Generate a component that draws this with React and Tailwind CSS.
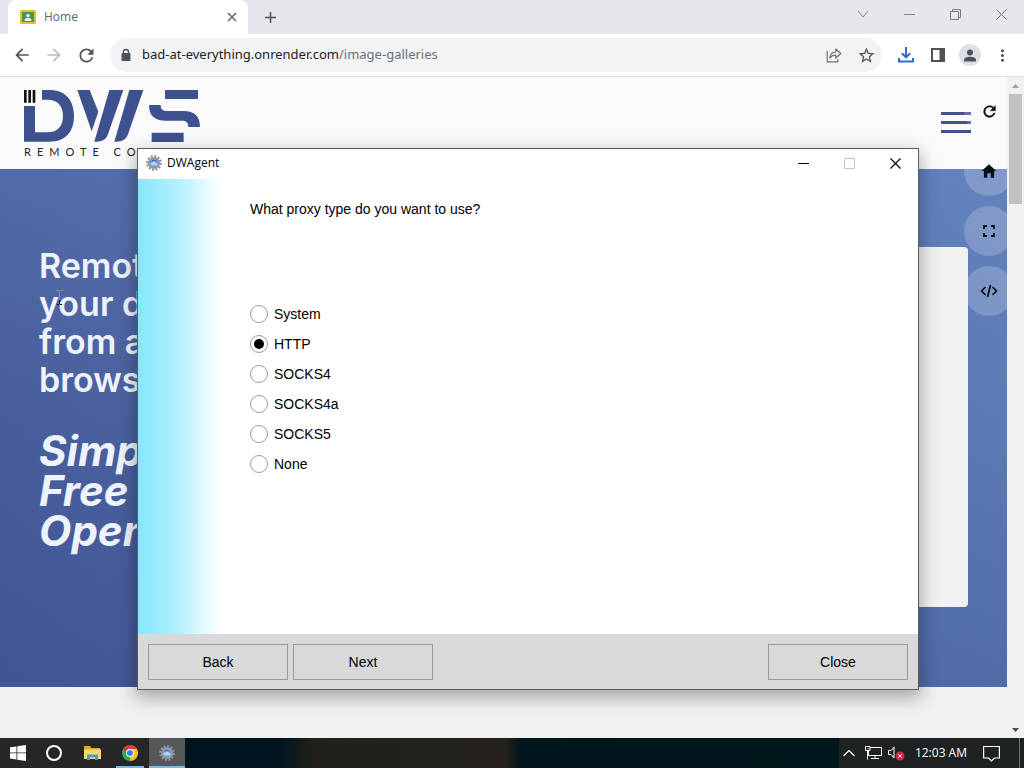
import React, { useState } from "react";
import {
  MdArrowBack,
  MdArrowForward,
  MdRefresh,
  MdStarBorder,
  MdMoreVert,
  MdAdd,
} from "react-icons/md";
import { IoMdRefresh, IoMdHome } from "react-icons/io";

const proxyTypes = ["System", "HTTP", "SOCKS4", "SOCKS4a", "SOCKS5", "None"];

const App = () => {
  return (
    <div className="relative flex min-h-screen flex-col overflow-hidden bg-[#f1f1f1] font-['Open_Sans','Noto_Sans',sans-serif]">
      <TabStrip />
      <Toolbar />
      <div className="flex flex-1">
        <WebPage />
        <Scrollbar />
      </div>
      <Taskbar />
      <AgentWindow />
    </div>
  );
};

const TabStrip = () => (
  <div className="flex h-[34px] items-stretch bg-[#e5e7ea] pl-2">
    <div className="flex w-60 items-center rounded-t-lg bg-white px-3 text-xs text-[#5f6368]">
      <Favicon />
      <span className="ml-2 flex-1">Home</span>
      <button aria-label="Close tab" className="flex h-4 w-4 items-center justify-center -mr-1">
        <svg width="10" height="10" viewBox="0 0 10 10" stroke="#5f6368" strokeWidth="1.5">
          <path d="M1 1l8 8M9 1l-8 8" />
        </svg>
      </button>
    </div>
    <button aria-label="New tab" className="flex w-11 items-center justify-center text-[#505357]">
      <MdAdd size={19} />
    </button>
    <div className="ml-auto flex pb-1.5">
      <button aria-label="Search tabs" className="flex w-[46px] items-center justify-center">
        <svg width="12" height="12" viewBox="0 0 12 12" fill="none" stroke="#85878a">
          <path d="M1 3l5 6 5-6" />
        </svg>
      </button>
      <button aria-label="Minimize" className="flex w-[46px] items-center justify-center">
        <svg width="11" height="11" viewBox="0 0 11 11" stroke="#85878a">
          <path d="M0 5.500h11" />
        </svg>
      </button>
      <button aria-label="Restore" className="flex w-[46px] items-center justify-center">
        <svg width="11" height="11" viewBox="0 0 11 11" fill="none" stroke="#77797c">
          <path d="M.5 2.500h8v8h-8zM2.500 2.500v-2h8v8h-2" />
        </svg>
      </button>
      <button aria-label="Close" className="flex w-[46px] items-center justify-center">
        <svg width="11" height="11" viewBox="0 0 11 11" stroke="#77797c">
          <path d="M.5.5l10 10M10.500.5l-10 10" />
        </svg>
      </button>
    </div>
  </div>
);

const Favicon = () => (
  <svg width="16" height="14" viewBox="0 0 16 14">
    <rect width="16" height="14" rx="1" fill="#f0bc2e" />
    <rect x="2" y="2" width="12" height="10" fill="#3c9a57" />
    <circle cx="8" cy="5.600" r="1.700" fill="#fff" />
    <path d="M4.500 11c0-2.500 1.500-3.200 3.500-3.200s3.500.7 3.500 3.200z" fill="#e8f5e9" />
  </svg>
);

const Toolbar = () => (
  <div className="flex h-[43px] items-center border-b border-[#dcdee1] bg-white px-1.5 text-[#505357]">
    <button aria-label="Back" className="flex w-8 justify-center">
      <MdArrowBack size={20} />
    </button>
    <button aria-label="Forward" className="flex w-8 justify-center text-[#babcbe]">
      <MdArrowForward size={20} />
    </button>
    <button aria-label="Reload" className="flex w-8 justify-center">
      <MdRefresh size={21} />
    </button>
    <div className="mx-2 flex h-[34px] flex-1 items-center rounded-full bg-[#f1f3f4] pl-2.5">
      <svg width="12" height="14" viewBox="0 0 12 14">
        <rect x="1.500" y="5" width="9" height="8" rx="1" fill="#505357" />
        <path d="M3.500 5.500V4a2.500 2.500 0 0 1 5 0v1.500" fill="none" stroke="#505357" strokeWidth="1.400" />
      </svg>
      <div className="ml-2.5 flex-1 font-['Noto_Sans',sans-serif] text-[13px] text-[#202124]">
        bad-at-everything.onrender.com<span className="text-[#6c7075]">/image-galleries</span>
      </div>
      <button aria-label="Share" className="flex w-8 justify-center">
        <svg width="16" height="16" viewBox="0 0 16 16" fill="none" stroke="#6a6d71" strokeWidth="1.200" strokeLinejoin="round">
          <path d="M1.200 4v10.800h10.600v-2.500" />
          <path d="M3.800 11c.2-3.500 2.200-5.800 6-6V2l5 4.500-5 4.500V8c-2.600 0-4.400.9-6 3z" />
        </svg>
      </button>
      <button aria-label="Bookmark" className="flex w-8 justify-center">
        <MdStarBorder size={19} />
      </button>
    </div>
    <button aria-label="Downloads" className="flex w-8 justify-center">
      <svg width="18" height="18" viewBox="0 0 18 18" fill="none" stroke="#2b6bd0" strokeWidth="2">
        <path d="M9 1v10M4.800 7.200L9 11.300l4.200-4.100M2 12v3.500h14V12" />
      </svg>
    </button>
    <button aria-label="Side panel" className="flex w-8 justify-center">
      <svg width="14" height="14" viewBox="0 0 14 14">
        <rect x="1" y="1" width="12" height="12" fill="none" stroke="#505357" strokeWidth="2" />
        <rect x="8.500" y="1" width="5" height="12" fill="#505357" />
      </svg>
    </button>
    <button aria-label="Profile" className="flex w-8 justify-center">
      <span className="flex h-[22px] w-[22px] items-center justify-center rounded-full bg-[#dde0e6]">
        <svg width="12" height="13" viewBox="0 0 12 13" fill="#4d525a">
          <circle cx="6" cy="3.500" r="3" />
          <path d="M0 12.500v-1.500c0-2.200 3-3.300 6-3.300s6 1.100 6 3.300v1.500z" />
        </svg>
      </span>
    </button>
    <button aria-label="Menu" className="flex w-8 justify-center">
      <MdMoreVert size={19} />
    </button>
  </div>
);

const WebPage = () => (
  <div className="relative flex-1 overflow-hidden">
    <header className="flex h-[92px] items-start justify-between bg-[#fafafa] pl-6 pr-9 pt-[13px]">
      <div>
        <DwsLogo />
        <div className="mt-1 text-[11px] leading-[12px] tracking-[6px] text-[#222] font-['Lato',sans-serif]">
          REMOTE CONTROL
        </div>
      </div>
      <button aria-label="Open menu" className="mt-[22px] flex w-[30px] flex-col gap-[6px]">
        <span className="h-[3px] bg-[#454f8d]" />
        <span className="h-[3px] bg-[#454f8d]" />
        <span className="h-[3px] bg-[#454f8d]" />
      </button>
    </header>

    <section className="flex h-[518px] items-center justify-between bg-linear-to-r from-[#475d9b] to-[#5c7ab5]">
      <div className="flex h-full w-full items-start justify-between bg-linear-to-b from-[#8fb4ee]/15 via-transparent to-[#26307a]/20 pl-[39px] pr-[39px] pt-[78px] font-['Inter','Open_Sans',sans-serif] text-[#eef2fb]">
        <div>
          <h1 className="text-[34px] leading-[38px] font-semibold">
            Remote access to
            <br />
            your devices
            <br />
            from any
            <br />
            browser
          </h1>
          <p className="mt-8 text-[42px] leading-[40px] font-bold italic">
            Simple
            <br />
            Free
            <br />
            Open source
          </p>
        </div>
        <div className="h-[360px] w-[430px] rounded bg-[#f1f1f1]" />
      </div>
    </section>

    {/* floating tools */}
    <div className="absolute -right-[7px] top-[9px] flex flex-col gap-2.5">
      <ToolButton label="Reload">
        <IoMdRefresh size={17} strokeWidth={14} stroke="currentColor" />
      </ToolButton>
      <ToolButton label="Home">
        <IoMdHome size={18} />
      </ToolButton>
      <ToolButton label="Fullscreen">
        <svg width="12" height="12" viewBox="0 0 12 12" fill="none" stroke="currentColor" strokeWidth="1.800">
          <path d="M1 4V1h3M8 1h3v3M11 8v3H8M4 11H1V8" />
        </svg>
      </ToolButton>
      <ToolButton label="Source">
        <svg width="18" height="14" viewBox="0 0 18 14" fill="none" stroke="currentColor" strokeWidth="1.700">
          <path d="M5.500 3L1.500 7l4 4M12.500 3l4 4-4 4M10.500 1l-3 12" />
        </svg>
      </ToolButton>
    </div>

    {/* text pointer */}
    <svg className="absolute left-[55px] top-[212px]" width="9" height="17" viewBox="0 0 9 17" fill="none">
      <path d="M1 1.500h3M5 1.500h3M4.500 2v9" stroke="#8b8d8c" />
      <path d="M4.500 11v4M2 15.500h2M5 15.500h2" stroke="#111" />
    </svg>
  </div>
);

const ToolButton = ({ label, children }) => (
  <button
    aria-label={label}
    className="flex h-[50px] w-[50px] items-center justify-center rounded-full bg-[#fafafa]/20 text-[#0a0f1c]"
  >
    {children}
  </button>
);

const DwsLogo = () => (
  <svg width="176" height="52" viewBox="72 270 528 156" fill="#3d518f">
    <path d="M72 270h8v38h-8zM85 270h8v38h-8zM98 270h8v38h-8z" fill="#111" />
    <path d="M72 318h33v79h37c32 0 47-20 47-49s-15-49-47-49h-16v-29h22c48 0 74 30 74 78s-26 77-74 77H72z" />
    <path d="M232 270h37l26 65-20 59z" />
    <path d="M328 270h42l-45 130c-7 20-18 26-42 25z" />
    <path d="M388 270h42l-45 130c-7 20-18 26-42 25z" />
    <path d="M495 270h99v27h-99z" />
    <path d="M447 315h35c0 14 7 18 20 18h48c34 0 50 16 50 48h-35c0-14-6-19-20-19h-46c-36 0-52-15-52-47z" />
    <path d="M455 398h96v28h-96z" />
  </svg>
);

const Scrollbar = () => (
  <div className="flex w-[17px] flex-col items-center bg-[#f1f1f1]">
    <div className="flex h-[17px] items-center">
      <svg width="7" height="4" viewBox="0 0 7 4">
        <path d="M0 4l3.500-4L7 4z" fill="#a3a3a3" />
      </svg>
    </div>
    <div className="h-[110px] w-[13px] bg-[#c1c1c1]" />
    <div className="mt-auto flex h-[17px] items-center">
      <svg width="7" height="4" viewBox="0 0 7 4">
        <path d="M0 0l3.500 4L7 0z" fill="#505050" />
      </svg>
    </div>
  </div>
);

const AgentWindow = () => {
  const [proxy, setProxy] = useState("HTTP");

  return (
    <div className="absolute left-[137px] top-[148px] w-[782px] border border-[#5a5c60] bg-white shadow-[0_6px_16px_2px_rgba(0,0,0,0.3)]">
      <div className="flex h-[30px] items-center pb-0.5 pl-2 text-xs text-black">
        <GearIcon />
        <span className="ml-[5px] flex-1">DWAgent</span>
        <button aria-label="Minimize window" className="flex w-[46px] justify-center">
          <svg width="11" height="11" viewBox="0 0 11 11" stroke="#000">
            <path d="M0 5.500h11" />
          </svg>
        </button>
        <button aria-label="Maximize window" disabled className="flex w-[46px] justify-center">
          <svg width="11" height="11" viewBox="0 0 11 11" fill="none" stroke="#c3c3c3">
            <path d="M.5.5h10v10H.5z" />
          </svg>
        </button>
        <button aria-label="Close window" className="flex w-[46px] justify-center">
          <svg width="11" height="11" viewBox="0 0 11 11" stroke="#000" strokeWidth="1.200">
            <path d="M.5.5l10 10M10.500.5l-10 10" />
          </svg>
        </button>
      </div>

      <div className="flex min-h-[455px] font-['Liberation_Sans',Arial,sans-serif] text-sm text-black">
        <div className="w-[84px] bg-linear-to-r from-[#84e7ff] via-[#b5f1ff] to-white" />
        <fieldset className="flex-1 pl-7 pt-5">
          <legend className="float-left leading-5">What proxy type do you want to use?</legend>
          <div className="clear-both flex flex-col items-start pt-20">
            {proxyTypes.map((type) => (
              <label key={type} className="flex h-[30px] items-center gap-1.5">
                <input
                  type="radio"
                  name="proxy"
                  value={type}
                  checked={proxy === type}
                  onChange={() => setProxy(type)}
                  className="h-[18px] w-[18px] appearance-none rounded-full border border-[#9a9a9a] bg-white bg-clip-content p-[3px] checked:bg-black"
                />
                {type}
              </label>
            ))}
          </div>
        </fieldset>
      </div>

      <div className="flex gap-[5px] bg-[#d9d9d9] p-2.5 pb-[9px] font-['Liberation_Sans',Arial,sans-serif] text-sm text-black">
        <button className="h-9 w-[140px] border border-[#9a9a9a]">Back</button>
        <button className="h-9 w-[140px] border border-[#9a9a9a]">Next</button>
        <button className="ml-auto h-9 w-[140px] border border-[#9a9a9a]">Close</button>
      </div>
    </div>
  );
};

const GearIcon = () => (
  <svg width="16" height="16" viewBox="0 0 16 16">
    <circle cx="8" cy="8" r="6.800" fill="none" stroke="#8e9196" strokeWidth="2.200" strokeDasharray="2 1.560" />
    <circle cx="8" cy="8" r="5" fill="#6f9be0" stroke="#979a9f" strokeWidth="2.200" />
    <path d="M4.500 9.500c0-1.500 1-2 1.800-1.800C6.600 6.500 9 6 9.500 7.800c1.500-.2 2 .8 2 1.700-.8 1.300-6 1.300-7 0z" fill="#b9d3fb" />
    <path d="M5 6.500a3.500 3.500 0 0 1 6 0L8.500 6z" fill="#3566cc" />
  </svg>
);

const Taskbar = () => (
  <footer className="flex h-[30px] items-stretch bg-[#00141c]">
    <div className="flex bg-[#262626]">
      <button aria-label="Start" className="flex w-9 items-center justify-center">
        <svg width="16" height="16" viewBox="0 0 16 16" fill="#fff">
          <path d="M0 2.300l6.500-.9v6.100H0zM7.300 1.300L16 0v7.500H7.300zM0 8.300h6.500v6.200L0 13.600zM7.300 8.300H16V16l-8.700-1.300z" />
        </svg>
      </button>
      <button aria-label="Search" className="flex w-9 items-center justify-center">
        <span className="h-4 w-4 rounded-full border-[2px] border-white" />
      </button>
      <button aria-label="File Explorer" className="flex w-[39px] items-center justify-center pl-0.5">
        <svg width="17" height="14" viewBox="0 0 17 14">
          <path d="M0 0h6l1.500 2H16v3H0z" fill="#e0a92e" />
          <path d="M0 3.500h17V13H0z" fill="#f8d775" />
          <path d="M3 14V8.500h11V14h-3v-2.800H6V14z" fill="#4a98c9" />
        </svg>
      </button>
      <button aria-label="Chrome" className="relative flex w-[38px] items-center justify-center">
        <ChromeIcon />
        <span className="absolute bottom-0 h-0.5 w-7 bg-[#76b9ed]" />
      </button>
      <button aria-label="DWAgent" className="relative flex w-9 items-center justify-center bg-[#555758]">
        <GearIcon />
        <span className="absolute bottom-0 h-0.5 w-full bg-[#76b9ed]" />
      </button>
    </div>

    {/* wallpaper showing through the bar */}
    <div className="flex-1 bg-linear-to-r from-[#00141f] from-14% via-[#22201a] via-20% to-[#24211d] to-48%">
      <div className="ml-[49%] h-full bg-linear-to-r from-[#24211d] via-[#00141c] via-5% to-[#00181d]" />
    </div>

    <div className="flex items-center bg-[#1f2223] text-xs text-white">
      <button aria-label="Show hidden icons" className="flex w-5 justify-center">
        <svg width="12" height="8" viewBox="0 0 12 8" fill="none" stroke="#fff" strokeWidth="1.200">
          <path d="M.5 7L6 1.500 11.500 7" />
        </svg>
      </button>
      <button aria-label="Network" className="ml-1.5 flex">
        <svg width="17" height="14" viewBox="0 0 17 14" fill="none" stroke="#fff">
          <path d="M5 1.500h11.500v8H3.500V5M10 9.500v3M6 12.500h8M.5.500H5v4H.5zM2.500 4.500v9M2.500 2.500h1" />
        </svg>
      </button>
      <button aria-label="Volume muted" className="ml-1.5 flex">
        <svg width="17" height="16" viewBox="0 0 17 16" fill="none">
          <path d="M.5 5.500H3l3-3.500v11L3 9.500H.5z" stroke="#fff" />
          <circle cx="12" cy="11" r="4.500" fill="#d1283c" />
          <path d="M10.300 9.300l3.400 3.400M13.700 9.300l-3.400 3.400" stroke="#fff" />
        </svg>
      </button>
      <time className="ml-2.5">12:03 AM</time>
      <button aria-label="Notifications" className="ml-4 flex">
        <svg width="17" height="17" viewBox="0 0 17 17" fill="none" stroke="#fff" strokeWidth="1.200">
          <path d="M.6 1.500h15.800v11.500h-5L8.500 16l-2.900-3h-5z" />
        </svg>
      </button>
      <button aria-label="Show desktop" className="ml-[19px] h-full w-[5px] border-l border-[#6c6e6f]" />
    </div>
  </footer>
);

const ChromeIcon = () => (
  <svg width="16" height="16" viewBox="0 0 16 16">
    <path d="M8 8L1.070 4A8 8 0 0 1 14.930 4z" fill="#e33b2e" />
    <path d="M8 8L14.930 4A8 8 0 0 1 8 16z" fill="#fbc116" />
    <path d="M8 8v8A8 8 0 0 1 1.070 4z" fill="#2da94f" />
    <path d="M8 4h6.930L11.400 10z" fill="#fbc116" />
    <path d="M8 4h6.930A8 8 0 0 0 8 0z" fill="#e33b2e" />
    <circle cx="8" cy="8" r="4" fill="#fff" />
    <circle cx="8" cy="8" r="3" fill="#3f7ee8" />
  </svg>
);

export default App;
